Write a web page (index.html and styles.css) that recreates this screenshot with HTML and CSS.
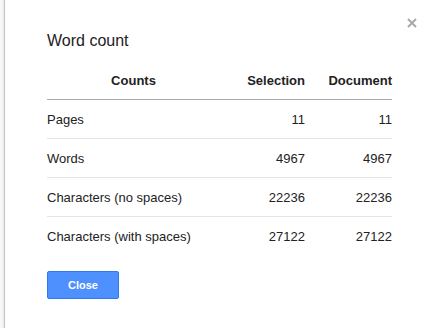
FILE: index.html
```html
<!DOCTYPE html>
<html>
<head>
	<meta charset="UTF-8">
	<title>Word count</title>
	<link rel="stylesheet" href="styles.css">
</head>
<body>
<div class="backdrop"></div>
<div class="dialog">
	<a class="close-x" title="Close">
		<svg width="10" height="10" viewBox="0 0 10 10"><path d="M1 1L9 9M9 1L1 9" stroke="#a9a9a9" stroke-width="2"/></svg>
	</a>
	<h2 class="title">Word count</h2>
	<table class="counts">
		<thead>
			<tr>
				<th class="c-name">Counts</th>
				<th class="c-sel">Selection</th>
				<th class="c-doc">Document</th>
			</tr>
		</thead>
		<tbody>
			<tr><td>Pages</td><td class="num">11</td><td class="num">11</td></tr>
			<tr><td>Words</td><td class="num">4967</td><td class="num">4967</td></tr>
			<tr><td>Characters (no spaces)</td><td class="num">22236</td><td class="num">22236</td></tr>
			<tr><td>Characters (with spaces)</td><td class="num">27122</td><td class="num">27122</td></tr>
		</tbody>
	</table>
	<button class="btn-close">Close</button>
</div>
</body>
</html>
```

FILE: styles.css
```css
*{
	font-family: Arial, "Liberation Sans", sans-serif;
}
body{
	margin: 0;
	height: 328px;
	display: flex;
	background: #fff;
	overflow: hidden;
}
div.backdrop{
	width: 4px;
	background: #f8f8f8;
}
div.dialog{
	flex: 1;
	position: relative;
	border-left: 1px solid #c4c4c4;
	padding: 31px 0 0 42px;
	box-shadow: -1px 0 2px rgba(0,0,0,0.08);
}
a.close-x{
	position: absolute;
	top: 18px;
	right: 13px;
	width: 10px;
	height: 10px;
	cursor: pointer;
}
a.close-x svg{
	display: block;
}
h2.title{
	margin: 0;
	font-size: 16px;
	line-height: 20px;
	font-weight: normal;
	color: #222;
}
table.counts{
	margin-top: 11px;
	width: 345px;
	border-collapse: collapse;
	table-layout: fixed;
	font-size: 13px;
	color: #222;
}
table.counts th{
	height: 37px;
	padding: 0;
	font-weight: bold;
	border-bottom: 1px solid #aaa;
	vertical-align: middle;
}
th.c-name{
	width: 173px;
	text-align: center;
}
th.c-sel{
	width: 85px;
	text-align: right;
}
th.c-doc{
	width: 87px;
	text-align: right;
}
table.counts td{
	height: 38px;
	padding: 0;
	border-bottom: 1px solid #e5e5e5;
	vertical-align: middle;
}
table.counts tbody tr:last-child td{
	border-bottom: none;
}
td.num{
	text-align: right;
}
button.btn-close{
	margin-top: 16px;
	width: 72px;
	height: 28px;
	background: #4d90fe;
	border: 1px solid #3079ed;
	border-radius: 2px;
	color: #fff;
	font-size: 11px;
	font-weight: bold;
	cursor: pointer;
	padding: 0;
}
```
